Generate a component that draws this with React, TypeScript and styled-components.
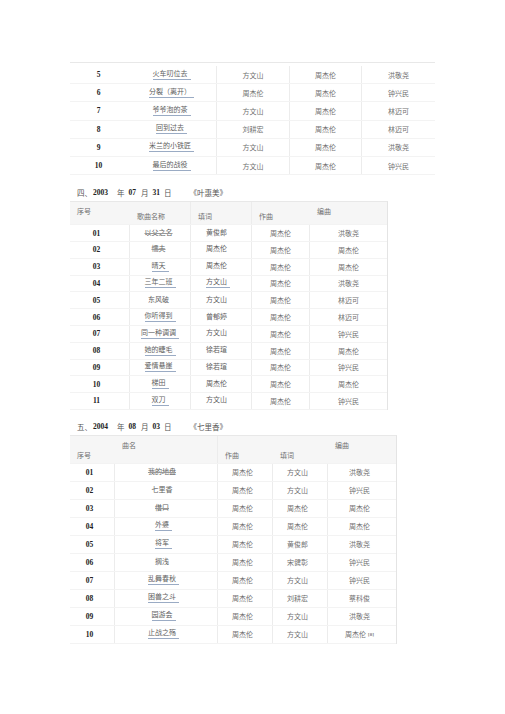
import React from 'react'
import styled, { createGlobalStyle } from 'styled-components'

const GlobalStyle = createGlobalStyle`
  html, body {
    margin: 0;
    padding: 0;
    background: #fff;
  }
  body {
    font-family: "Liberation Serif", "Noto Sans CJK SC", serif;
    color: #666;
  }
`

const Page = styled.div`
  width: 505px;
  height: 714px;
  padding-top: 62px;
  box-sizing: border-box;
  overflow: hidden;
`

const Section = styled.section`
  margin-left: 70px;
`

const Heading = styled.div<{ $mt?: number }>`
  display: flex;
  align-items: center;
  height: 14px;
  margin-top: ${p => p.$mt ?? 0}px;
  padding-left: 7px;
  font-size: 7.5px;
  color: #444;
`

const Part = styled.span<{ $gap?: number; $num?: boolean }>`
  margin-left: ${p => p.$gap ?? 0}px;
  font-weight: ${p => (p.$num ? 700 : 400)};
  color: ${p => (p.$num ? '#222' : '#555')};
`

const Table = styled.div<{ $outline?: boolean; $pt?: number; $mt?: number }>`
  display: flex;
  flex-direction: column;
  width: max-content;
  margin-top: ${p => p.$mt ?? 0}px;
  border-top: 1px solid #e8e8e8;
  border-right: ${p => (p.$outline ? '1px solid #e4e4e4' : 'none')};
  padding-top: ${p => p.$pt ?? 0}px;
`

const Row = styled.div<{ $cols: string; $h: number; $head?: boolean }>`
  display: grid;
  grid-template-columns: ${p => p.$cols};
  height: ${p => p.$h}px;
  box-sizing: border-box;
  background: ${p => (p.$head ? '#f6f6f6' : '#fff')};
  border-bottom: 1px solid ${p => (p.$head ? '#f3f3f3' : '#f3f3f3')};
`

const Cell = styled.div<{ $line?: boolean; $pr?: number }>`
  display: flex;
  align-items: center;
  justify-content: center;
  padding-right: ${p => p.$pr ?? 0}px;
  border-right: ${p => (p.$line ? '1px solid #ececec' : 'none')};
  font-size: 7px;
  white-space: nowrap;
  color: #707070;
`

const HeadCell = styled.div<{ $line?: boolean; $v: 'top' | 'bottom' }>`
  display: flex;
  align-items: ${p => (p.$v === 'top' ? 'flex-start' : 'flex-end')};
  padding: ${p => (p.$v === 'top' ? '4px 0 0 7px' : '0 0 3px 7px')};
  border-right: ${p => (p.$line ? '1px solid #ececec' : 'none')};
  font-size: 7px;
  color: #707070;
`

const Num = styled.span`
  font-weight: 700;
  color: #222;
  font-size: 7.5px;
`

const Link = styled.span<{ $mode?: 'under' | 'mid' }>`
  display: inline-block;
  line-height: 9px;
  padding-right: 3px;
  color: #606060;
  ${p =>
    p.$mode === 'under'
      ? 'border-bottom: 1px solid #9aabc4;'
      : p.$mode === 'mid'
      ? 'text-decoration: line-through; text-decoration-color: #999;'
      : ''}
`

const Sup = styled.sup`
  font-size: 5px;
  color: #333;
  margin-left: 2px;
  vertical-align: 4px;
`

type Mode = 'under' | 'mid' | undefined
type Song = [string, string, Mode, string, string, string, Mode?]

const firstCols = '57px 90px 73px 72px 73px'
const firstRows: Song[] = [
  ['5', '火车叨位去', 'under', '方文山', '周杰伦', '洪敬尧'],
  ['6', '分裂（离开）', 'under', '周杰伦', '周杰伦', '钟兴民'],
  ['7', '爷爷泡的茶', 'under', '方文山', '周杰伦', '林迈可'],
  ['8', '回到过去', 'under', '刘耕宏', '周杰伦', '林迈可'],
  ['9', '米兰的小铁匠', 'under', '方文山', '周杰伦', '洪敬尧'],
  ['10', '最后的战役', 'under', '方文山', '周杰伦', '钟兴民'],
]

const yehuiCols = '60px 61px 61px 58px 77px'
const yehuiRows: Song[] = [
  ['01', '以父之名', 'mid', '黄俊郎', '周杰伦', '洪敬尧'],
  ['02', '懦夫', 'mid', '周杰伦', '周杰伦', '周杰伦'],
  ['03', '晴天', 'under', '周杰伦', '周杰伦', '周杰伦'],
  ['04', '三年二班', 'under', '方文山', '周杰伦', '洪敬尧', 'under'],
  ['05', '东风破', undefined, '方文山', '周杰伦', '林迈可'],
  ['06', '你听得到', 'under', '曾郁婷', '周杰伦', '林迈可'],
  ['07', '同一种调调', 'under', '方文山', '周杰伦', '钟兴民'],
  ['08', '她的睫毛', 'under', '徐若瑄', '周杰伦', '周杰伦'],
  ['09', '爱情悬崖', 'under', '徐若瑄', '周杰伦', '钟兴民'],
  ['10', '梯田', 'under', '周杰伦', '周杰伦', '周杰伦'],
  ['11', '双刀', 'under', '方文山', '周杰伦', '钟兴民'],
]

const qiliCols = '45px 103px 55px 55px 68px'
const qiliRows: Song[] = [
  ['01', '我的地盘', 'mid', '周杰伦', '方文山', '洪敬尧'],
  ['02', '七里香', undefined, '周杰伦', '方文山', '钟兴民'],
  ['03', '借口', 'mid', '周杰伦', '周杰伦', '周杰伦'],
  ['04', '外婆', 'under', '周杰伦', '周杰伦', '周杰伦'],
  ['05', '将军', 'under', '周杰伦', '黄俊郎', '洪敬尧'],
  ['06', '搁浅', undefined, '周杰伦', '宋健彰', '钟兴民'],
  ['07', '乱舞春秋', 'under', '周杰伦', '方文山', '钟兴民'],
  ['08', '困兽之斗', 'under', '周杰伦', '刘耕宏', '蔡科俊'],
  ['09', '园游会', 'under', '周杰伦', '方文山', '洪敬尧'],
  ['10', '止战之殇', 'under', '周杰伦', '方文山', '周杰伦'],
]

const DateLine = ({ no, y, m, d, album }: { no: string; y: string; m: string; d: string; album: string }) => (
  <>
    <Part>{no}</Part>
    <Part $num $gap={1}>{y}</Part>
    <Part $gap={9}>年</Part>
    <Part $num $gap={4}>{m}</Part>
    <Part $gap={5}>月</Part>
    <Part $num $gap={4}>{d}</Part>
    <Part $gap={4}>日</Part>
    <Part $gap={18}>《{album}》</Part>
  </>
)

export default function App() {
  return (
    <Page>
      <GlobalStyle />

      <Section>
        <Table $pt={3}>
          {firstRows.map(r => (
            <Row key={r[0]} $cols={firstCols} $h={18.2}>
              <Cell><Num>{r[0]}</Num></Cell>
              <Cell $line><Link $mode={r[2]}>{r[1]}</Link></Cell>
              <Cell $line>{r[3]}</Cell>
              <Cell $line>{r[4]}</Cell>
              <Cell>{r[5]}</Cell>
            </Row>
          ))}
        </Table>
      </Section>

      <Section>
        <Heading $mt={10}>
          <DateLine no="四、" y="2003" m="07" d="31" album="叶惠美" />
        </Heading>
        <Table $outline $mt={2}>
          <Row $cols={yehuiCols} $h={23} $head>
            <HeadCell $v="top">序号</HeadCell>
            <HeadCell $v="bottom" $line>歌曲名称</HeadCell>
            <HeadCell $v="bottom" $line>填词</HeadCell>
            <HeadCell $v="bottom">作曲</HeadCell>
            <HeadCell $v="top">编曲</HeadCell>
          </Row>
          {yehuiRows.map(r => (
            <Row key={r[0]} $cols={yehuiCols} $h={16.8}>
              <Cell $line $pr={6}><Num>{r[0]}</Num></Cell>
              <Cell $line><Link $mode={r[2]}>{r[1]}</Link></Cell>
              <Cell $line $pr={6}><Link $mode={r[6]}>{r[3]}</Link></Cell>
              <Cell $line>{r[4]}</Cell>
              <Cell>{r[5]}</Cell>
            </Row>
          ))}
        </Table>
      </Section>

      <Section>
        <Heading $mt={10}>
          <DateLine no="五、" y="2004" m="08" d="03" album="七里香" />
        </Heading>
        <Table $outline $mt={1}>
          <Row $cols={qiliCols} $h={28} $head>
            <HeadCell $v="bottom">序号</HeadCell>
            <HeadCell $v="top" $line>曲名</HeadCell>
            <HeadCell $v="bottom">作曲</HeadCell>
            <HeadCell $v="bottom">填词</HeadCell>
            <HeadCell $v="top">编曲</HeadCell>
          </Row>
          {qiliRows.map((r, i) => (
            <Row key={r[0]} $cols={qiliCols} $h={18}>
              <Cell $line $pr={5}><Num>{r[0]}</Num></Cell>
              <Cell $line $pr={5}><Link $mode={r[2]}>{r[1]}</Link></Cell>
              <Cell $line $pr={5}>{r[3]}</Cell>
              <Cell $line $pr={5}>{r[4]}</Cell>
              <Cell $pr={5}>
                {r[5]}
                {i === qiliRows.length - 1 && <Sup>[8]</Sup>}
              </Cell>
            </Row>
          ))}
        </Table>
      </Section>
    </Page>
  )
}
